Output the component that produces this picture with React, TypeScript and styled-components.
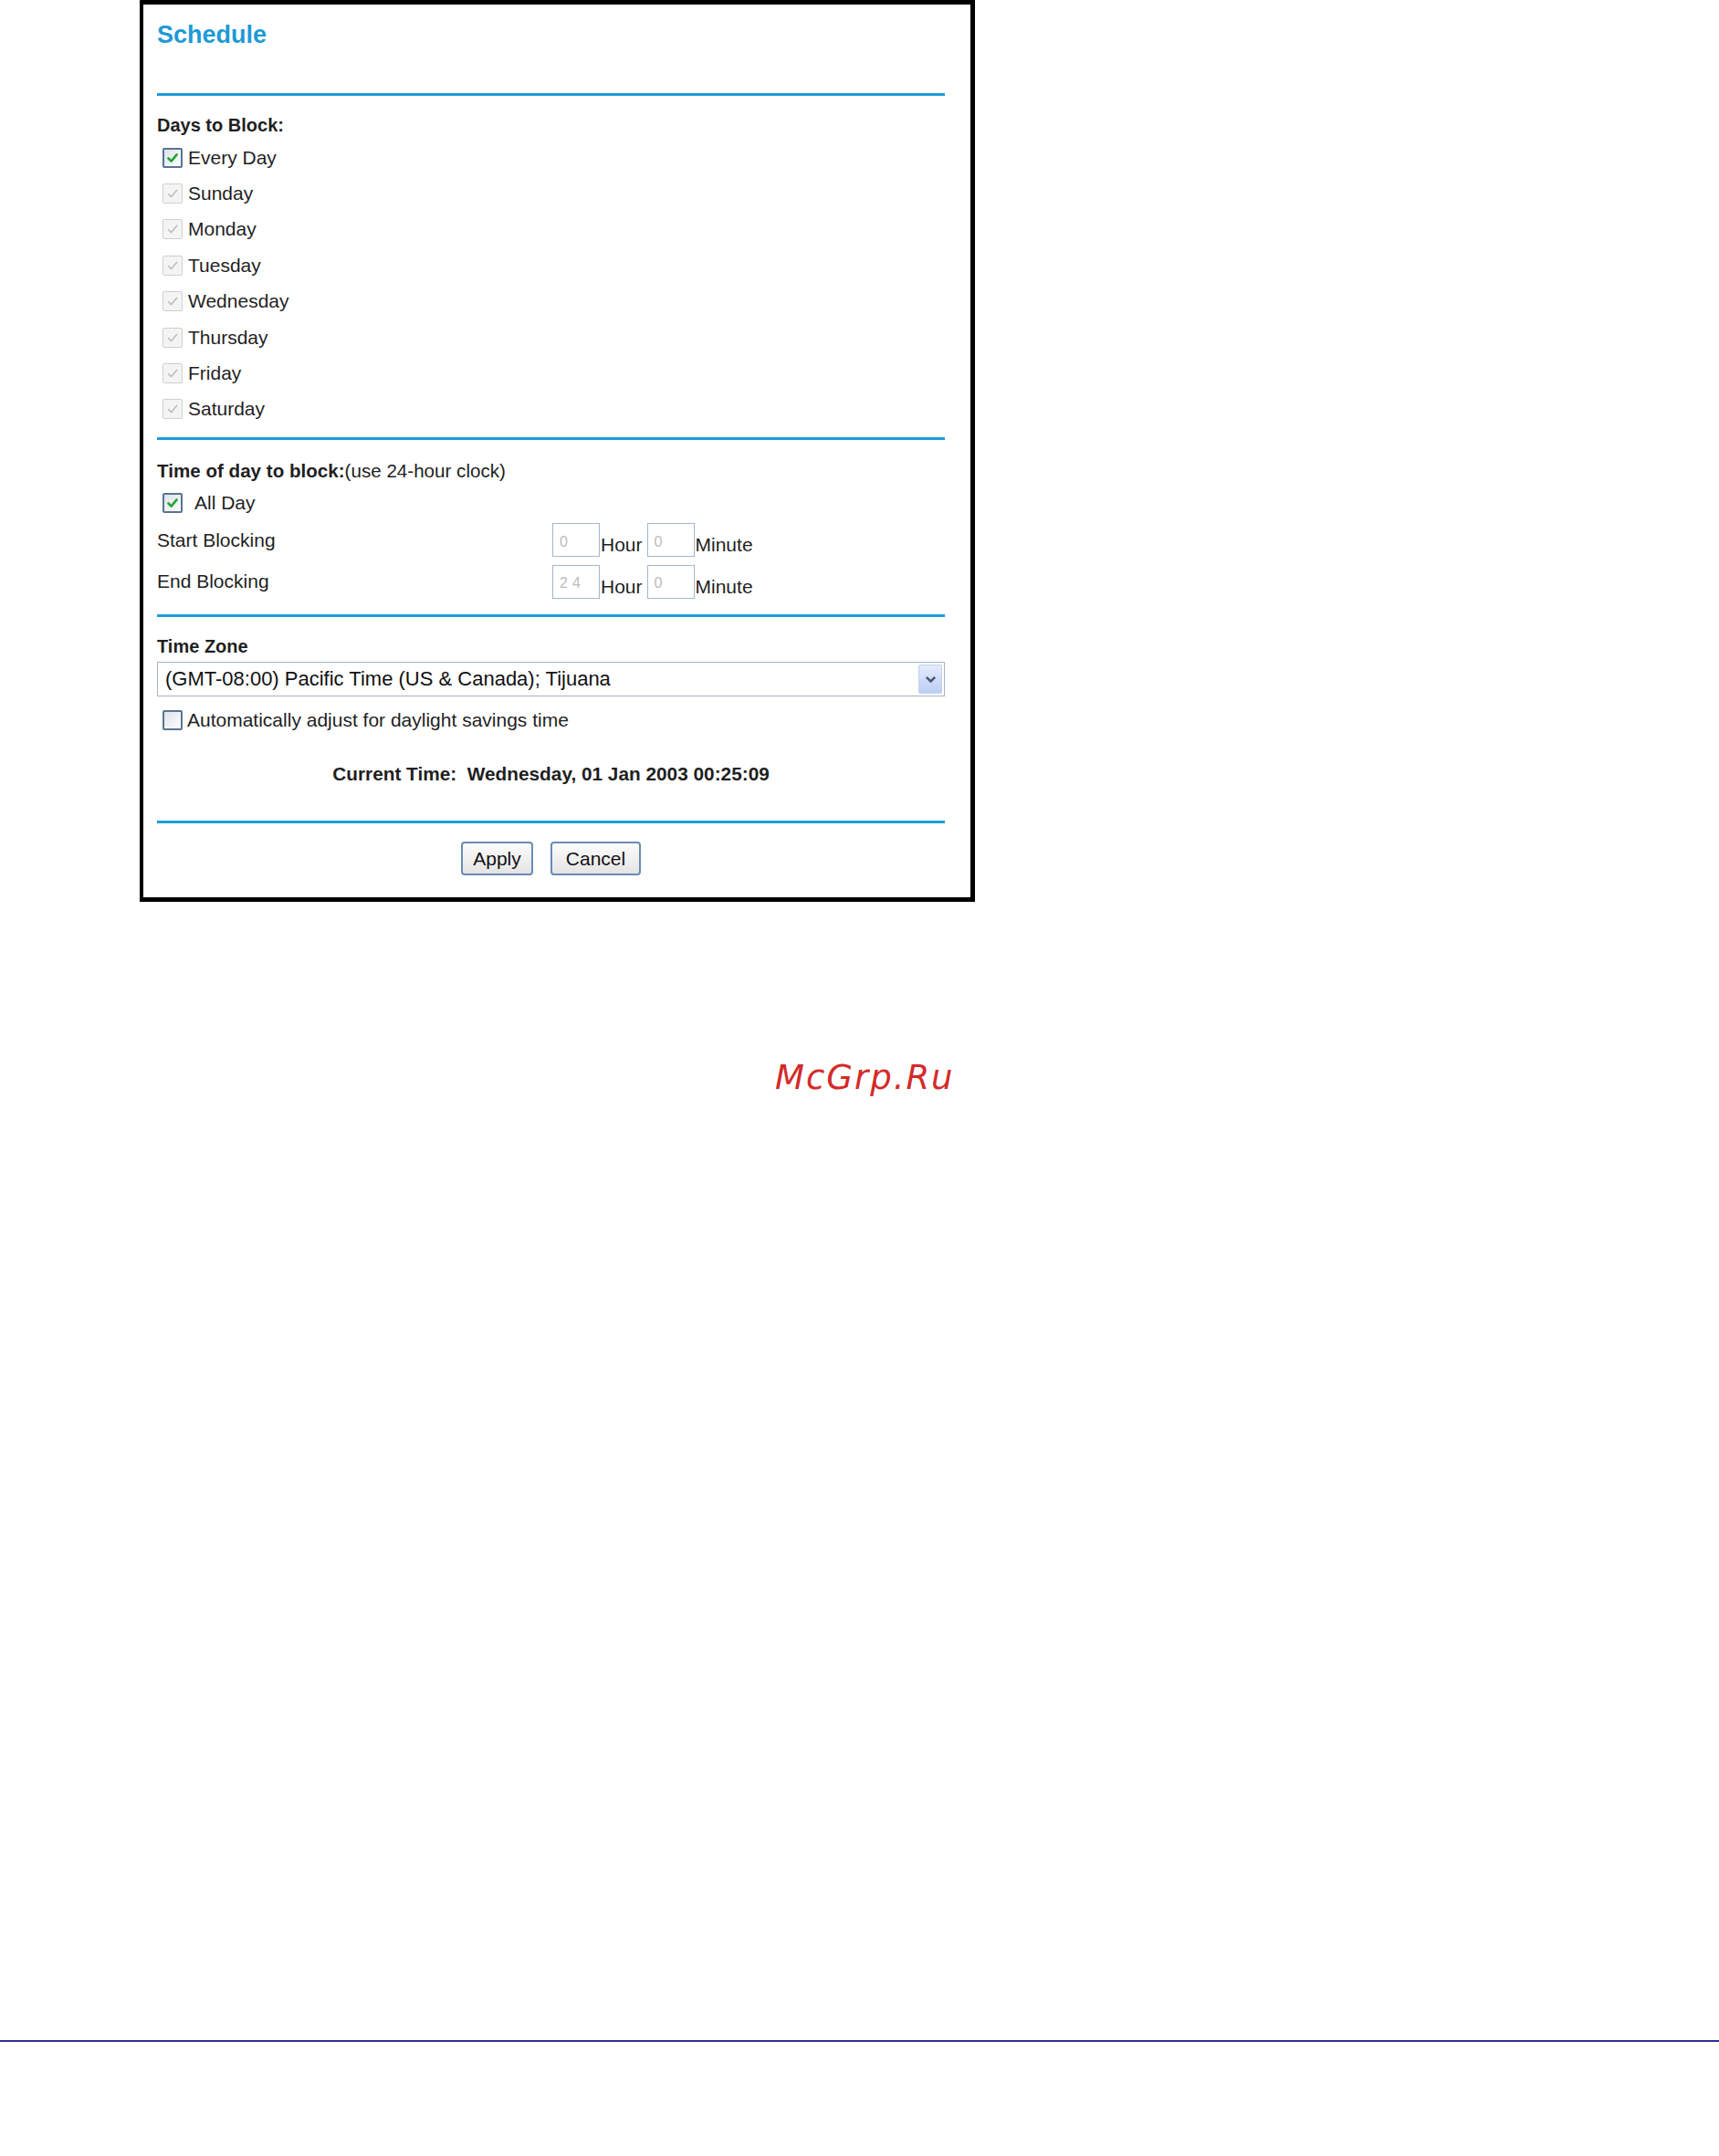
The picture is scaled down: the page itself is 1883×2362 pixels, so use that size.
import React from "react";
import styled, { createGlobalStyle } from "styled-components";

type BoxKind = "on" | "dim" | "off";

const DAYS = ["Sunday", "Monday", "Tuesday", "Wednesday", "Thursday", "Friday", "Saturday"];

const GlobalStyle = createGlobalStyle`
	html, body {
		margin: 0;
		padding: 0;
		background: #ffffff;
	}
	body {
		font-family: "Liberation Sans", Arial, sans-serif;
		color: #1f1f1f;
	}
`;

const Check: React.FC<{ kind: BoxKind }> = ({ kind }) => (
	<Box $kind={kind}>
		{kind !== "off" && (
			<svg width="14" height="14" viewBox="0 0 14 14">
				<path
					d="M2.5 7.5 L5.6 10.6 L11.6 3.4"
					fill="none"
					stroke={kind === "on" ? "#25a437" : "#bdbdbd"}
					strokeWidth={kind === "on" ? 2.6 : 1.6}
					strokeLinecap="round"
					strokeLinejoin="round"
				/>
			</svg>
		)}
	</Box>
);

const App: React.FC = () => {
	return (
		<Page>
			<GlobalStyle />
			<Panel>
				<Title>Schedule</Title>
				<Divider $top={44} />

				<Heading $top={16}>Days to Block:</Heading>
				<CheckRow $height={39.4} $gap={6}>
					<Check kind="on" />
					<span>Every Day</span>
				</CheckRow>
				{DAYS.map((d) => (
					<CheckRow key={d} $height={39.4} $gap={6}>
						<Check kind="dim" />
						<span>{d}</span>
					</CheckRow>
				))}
				<Divider $top={11} />

				<Heading $top={17} $height={34} $size={20.6}>
					Time of day to block:<Plain>(use 24-hour clock)</Plain>
				</Heading>
				<CheckRow $height={36} $gap={13}>
					<Check kind="on" />
					<span>All Day</span>
				</CheckRow>
				<BlockRow>
					<span>Start Blocking</span>
					<TimeGroup>
						<TimeInput readOnly value="0" />
						<Unit>Hour</Unit>
						<TimeInput readOnly value="0" />
						<Unit>Minute</Unit>
					</TimeGroup>
				</BlockRow>
				<BlockRow>
					<span>End Blocking</span>
					<TimeGroup>
						<TimeInput readOnly value="24" $spaced />
						<Unit>Hour</Unit>
						<TimeInput readOnly value="0" />
						<Unit>Minute</Unit>
					</TimeGroup>
				</BlockRow>
				<Divider $top={13} />

				<Heading $top={16}>Time Zone</Heading>
				<SelectBox>
					<span>(GMT-08:00) Pacific Time (US &amp; Canada); Tijuana</span>
					<ArrowButton>
						<svg width="13" height="9" viewBox="0 0 13 9">
							<path d="M1.8 1.8 L6.5 6.5 L11.2 1.8" fill="none" stroke="#4a5877" strokeWidth="2.6" />
						</svg>
					</ArrowButton>
				</SelectBox>
				<CheckRow $height={38} $gap={5} $top={7}>
					<Check kind="off" />
					<span>Automatically adjust for daylight savings time</span>
				</CheckRow>

				<CurrentTime>{"Current Time:  Wednesday, 01 Jan 2003 00:25:09"}</CurrentTime>
				<Divider $top={33} />

				<ButtonRow>
					<Button $width={79}>Apply</Button>
					<Button $width={99}>Cancel</Button>
				</ButtonRow>
			</Panel>

			<Watermark>McGrp.Ru</Watermark>
			<FooterRule />
		</Page>
	);
};

export default App;

const Page = styled.div`
	width: 1883px;
	height: 2362px;
	display: flex;
	flex-direction: column;
	align-items: flex-start;
	background: #ffffff;
	overflow: hidden;
`;

const Panel = styled.div`
	box-sizing: border-box;
	width: 915px;
	margin-left: 153px;
	border: 5px solid #000000;
	border-left-width: 4px;
	padding: 0 28px 24px 15px;
	display: flex;
	flex-direction: column;
	font-size: 21px;
`;

const Title = styled.div`
	margin-top: 13px;
	height: 40px;
	line-height: 40px;
	font-size: 27px;
	font-weight: 700;
	color: #1d9ad6;
`;

const Divider = styled.div<{ $top: number }>`
	margin-top: ${(p) => p.$top}px;
	height: 3px;
	background: #1f9cd8;
`;

const Heading = styled.div<{ $top: number; $height?: number; $size?: number }>`
	margin-top: ${(p) => p.$top}px;
	height: ${(p) => p.$height ?? 32}px;
	line-height: ${(p) => p.$height ?? 32}px;
	font-size: ${(p) => p.$size ?? 20}px;
	font-weight: 700;
	white-space: nowrap;
`;

const Plain = styled.span`
	font-weight: 400;
`;

const CheckRow = styled.div<{ $height: number; $gap: number; $top?: number }>`
	margin-top: ${(p) => p.$top ?? 0}px;
	height: ${(p) => p.$height}px;
	display: flex;
	align-items: center;
	gap: ${(p) => p.$gap}px;
	padding-left: 6px;
	white-space: nowrap;
`;

const Box = styled.span<{ $kind: BoxKind }>`
	box-sizing: border-box;
	width: 22px;
	height: 22px;
	flex-shrink: 0;
	display: inline-flex;
	align-items: center;
	justify-content: center;
	border-radius: 2px;
	border: ${(p) => (p.$kind === "dim" ? "1.5px solid #cfcfcf" : "2px solid #5a7392")};
	background: ${(p) => (p.$kind === "dim" ? "#f4f4f4" : "linear-gradient(135deg, #dde3ea, #fdfdfd)")};
`;

const BlockRow = styled.div`
	height: 45.5px;
	display: grid;
	grid-template-columns: 433px auto;
	align-items: center;
	white-space: nowrap;
`;

const TimeGroup = styled.div`
	display: flex;
	align-items: flex-end;
`;

const TimeInput = styled.input<{ $spaced?: boolean }>`
	box-sizing: border-box;
	width: 52px;
	height: 37px;
	margin: 0;
	padding: 4px 0 0 7px;
	border: 1.5px solid #a3b7cf;
	background: #ffffff;
	font-family: "Liberation Sans", Arial, sans-serif;
	font-size: 16px;
	letter-spacing: ${(p) => (p.$spaced ? "5px" : "0")};
	color: #bcbcbc;
	outline: none;
`;

const Unit = styled.span`
	line-height: 21px;
	margin: 0 5px 3px 1px;
`;

const SelectBox = styled.div`
	box-sizing: border-box;
	margin-top: 1px;
	height: 38px;
	display: flex;
	align-items: center;
	padding-left: 8px;
	border: 1px solid #a9b4c2;
	font-size: 22px;
	color: #111111;
	white-space: nowrap;
`;

const ArrowButton = styled.span`
	box-sizing: border-box;
	margin-left: auto;
	margin-right: 2px;
	width: 26px;
	height: 32px;
	display: flex;
	align-items: center;
	justify-content: center;
	border: 1px solid #c4d2ef;
	border-radius: 2px;
	background: linear-gradient(#e4ecfd, #bccdf4);
`;

const CurrentTime = styled.div`
	margin-top: 22px;
	height: 36px;
	line-height: 36px;
	text-align: center;
	font-size: 20.8px;
	font-weight: 700;
	white-space: pre;
`;

const ButtonRow = styled.div`
	margin-top: 20px;
	display: flex;
	justify-content: center;
	gap: 19px;
`;

const Button = styled.button<{ $width: number }>`
	box-sizing: border-box;
	width: ${(p) => p.$width}px;
	height: 37px;
	padding: 0;
	border: 2px solid #6a8cb4;
	border-radius: 4px;
	background: linear-gradient(#fcfcfc, #e4e4e4);
	font-family: "Liberation Sans", Arial, sans-serif;
	font-size: 21px;
	color: #111111;
`;

const Watermark = styled.div`
	margin: 171px 0 0 849px;
	height: 44px;
	line-height: 44px;
	font-family: "DejaVu Sans", "Liberation Sans", sans-serif;
	font-style: italic;
	font-size: 37px;
	letter-spacing: 2px;
	color: #d42a2a;
	white-space: nowrap;
`;

const FooterRule = styled.div`
	align-self: stretch;
	margin-top: auto;
	margin-bottom: 125px;
	height: 2px;
	background: #2e3192;
`;
